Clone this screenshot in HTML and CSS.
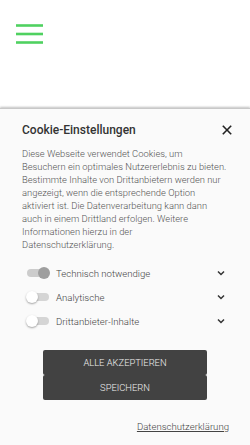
FILE: index.html
```html
<!DOCTYPE html>
<html lang="de">
<head>
<meta charset="utf-8">
<link rel="stylesheet" href="styles.css">
</head>
<body>
<header class="top">
  <button class="burger" aria-label="Menü">
    <svg width="28" height="21" viewBox="0 0 28 21"><g stroke="#4fd160" stroke-width="2.6"><line x1="0" y1="1.5" x2="27" y2="1.5"/><line x1="0" y1="10" x2="27" y2="10"/><line x1="0" y1="18.5" x2="27" y2="18.5"/></g></svg>
  </button>
</header>
<section class="panel">
  <div class="head">
    <h2 class="title">Cookie-Einstellungen</h2>
    <svg class="close" width="10" height="10" viewBox="0 0 10 10"><g stroke="#222" stroke-width="1.6"><line x1="0.8" y1="0.8" x2="9.2" y2="9.2"/><line x1="9.2" y1="0.8" x2="0.8" y2="9.2"/></g></svg>
  </div>
  <p class="desc">Diese Webseite verwendet Cookies, um Besuchern ein optimales Nutzererlebnis zu bieten. Bestimmte Inhalte von Drittanbietern werden nur angezeigt, wenn die entsprechende Option aktiviert ist. Die Datenverarbeitung kann dann auch in einem Drittland erfolgen. Weitere Informationen hierzu in der<br><span class="ref">Datenschutzerklärung</span>.</p>
  <ul class="opts">
    <li class="opt"><span class="tog on"><span class="knob"></span></span><span class="lbl">Technisch notwendige</span><svg class="chev" width="8" height="6" viewBox="0 0 8 6"><polyline points="1,1.5 4,4.5 7,1.5" fill="none" stroke="#333" stroke-width="1.5"/></svg></li>
    <li class="opt"><span class="tog"><span class="knob"></span></span><span class="lbl">Analytische</span><svg class="chev" width="8" height="6" viewBox="0 0 8 6"><polyline points="1,1.5 4,4.5 7,1.5" fill="none" stroke="#333" stroke-width="1.5"/></svg></li>
    <li class="opt"><span class="tog"><span class="knob"></span></span><span class="lbl">Drittanbieter-Inhalte</span><svg class="chev" width="8" height="6" viewBox="0 0 8 6"><polyline points="1,1.5 4,4.5 7,1.5" fill="none" stroke="#333" stroke-width="1.5"/></svg></li>
  </ul>
  <div class="btns">
    <button class="btn">ALLE AKZEPTIEREN</button>
    <button class="btn">SPEICHERN</button>
  </div>
  <div class="foot"><a class="link" href="#">Datenschutzerklärung</a></div>
</section>
</body>
</html>
```
FILE: styles.css
```css
html, body {
  margin: 0;
  padding: 0;
  background: #fafafa;
  font-family: Roboto, "Liberation Sans", sans-serif;
}
.top {
  height: 108px;
  background: #fff;
  padding: 24px 0 0 16px;
  box-sizing: border-box;
}
.burger {
  border: 0;
  background: none;
  padding: 0;
  display: block;
}
.burger svg { display: block; }
.panel {
  background: #fafafa;
  box-shadow: 0 -1px 2px rgba(0,0,0,0.25);
  border-top: 1px solid #c8c8c8;
  padding: 13px 17px 0 22px;
  height: 336px;
  box-sizing: border-box;
}
.head {
  display: flex;
  align-items: center;
  justify-content: space-between;
}
.title {
  margin: 0;
  font-size: 12px;
  font-weight: 500;
  color: #333;
  line-height: 16px;
}
.close { display: block; margin-right: 1px; }
.desc {
  margin: 9px 0 0 0;
  width: 205px;
  font-size: 9.4px;
  font-weight: 300;
  line-height: 13px;
  color: #555;
}
.opts {
  list-style: none;
  margin: 10px 0 0 0;
  padding: 0 0 0 5px;
}
.opt {
  display: flex;
  align-items: center;
  height: 24px;
}
.tog {
  position: relative;
  width: 22px;
  height: 8px;
  border-radius: 4px;
  background: #d5d5d5;
  margin-right: 7px;
}
.knob {
  position: absolute;
  top: -2px;
  left: -1px;
  width: 12px;
  height: 12px;
  border-radius: 50%;
  background: #fff;
  box-shadow: 0 1px 2px rgba(0,0,0,0.35);
}
.tog.on { background: #ccc; }
.tog.on .knob {
  left: auto;
  right: -1px;
  background: #9e9e9e;
  box-shadow: none;
}
.lbl {
  flex: 1;
  font-size: 9.6px;
  font-weight: 300;
  color: #444;
}
.chev { display: block; margin-right: 8px; }
.btns {
  margin: 17px 0 0 21px;
  width: 164px;
  display: flex;
  flex-direction: column;
}
.btn {
  height: 25px;
  border: 0;
  border-radius: 2px;
  background: #424242;
  color: #eee;
  font-family: Roboto, "Liberation Sans", sans-serif;
  font-size: 9.4px;
  font-weight: 300;
  padding: 0;
}
.foot {
  display: flex;
  justify-content: flex-end;
  margin-top: 21px;
  padding-right: 4px;
}
.link {
  font-size: 9.6px;
  font-weight: 300;
  color: #444;
  text-decoration: underline;
}
```
